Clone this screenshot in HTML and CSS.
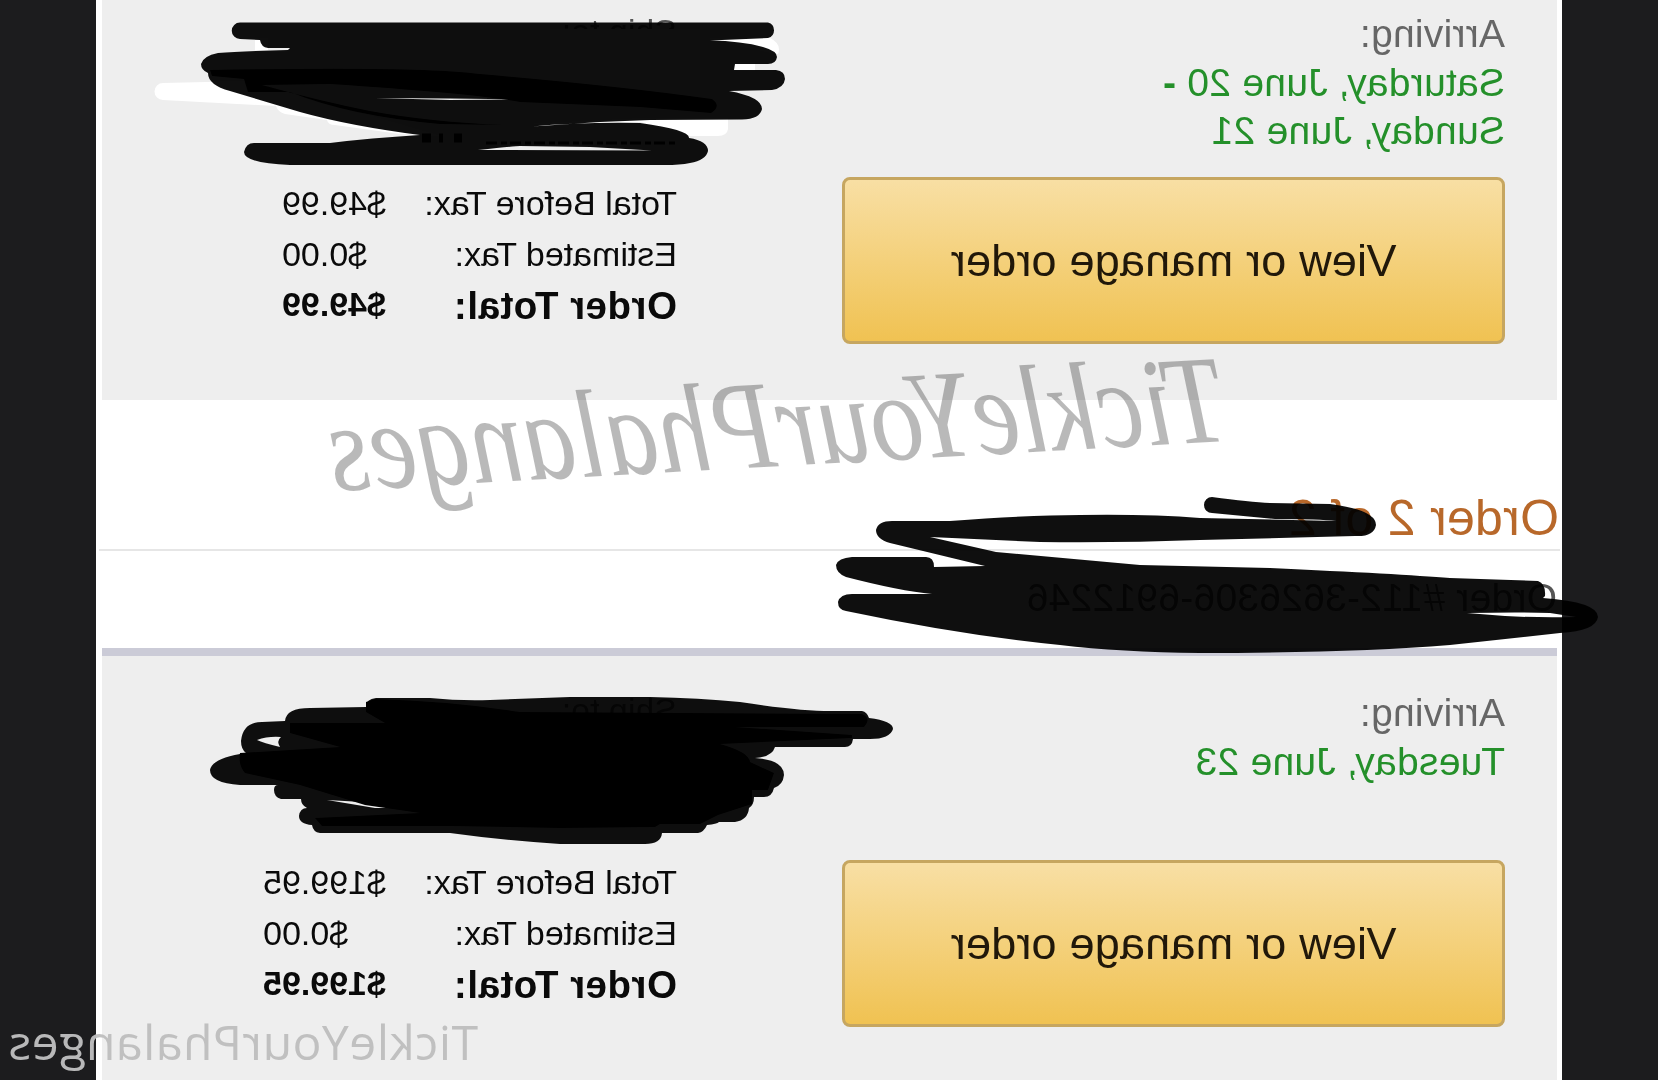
FILE: index.html
```html
<!DOCTYPE html>
<html lang="en">
<head>
<meta charset="utf-8">
<title>Order confirmation</title>
<link rel="stylesheet" href="styles.css">
</head>
<body>
<div class="screen">
  <main class="page">
    <section class="panel panel-first">
      <div class="delivery">
        <div class="label">Arriving:</div>
        <div class="date">Saturday, June 20 <b>-</b><br>Sunday, June 21</div>
        <a class="button">View or manage order</a>
      </div>
      <div class="summary">
        <div class="ship">Ship to:</div>
        <div class="totals">
          <span>Total Before Tax:</span><span class="amount">$49.99</span>
          <span>Estimated Tax:</span><span class="amount">$0.00</span>
          <strong class="total">Order Total:</strong><strong class="amount">$49.99</strong>
        </div>
      </div>
    </section>
    <header class="order-head">
      <h2 class="order-title">Order 2 of 2</h2>
      <div class="order-number">Order #112-3626306-6912246</div>
    </header>
    <section class="panel panel-second">
      <div class="delivery">
        <div class="label">Arriving:</div>
        <div class="date">Tuesday, June 23</div>
        <a class="button">View or manage order</a>
      </div>
      <div class="summary">
        <div class="ship">Ship to:</div>
        <div class="totals">
          <span>Total Before Tax:</span><span class="amount">$199.95</span>
          <span>Estimated Tax:</span><span class="amount">$0.00</span>
          <strong class="total">Order Total:</strong><strong class="amount">$199.95</strong>
        </div>
      </div>
    </section>
  </main>
  <div class="mark mark-script">TickleYourPhalanges</div>
  <div class="mark mark-plain">TickleYourPhalanges</div>
</div>
<svg class="ink" width="1658" height="1080" viewBox="0 0 1658 1080">
  <!-- white marker under the first scribble -->
  <g fill="#fff">
    <path d="M163 83L250 81L440 136L400 134L335 125Q328 125 327 120L285 114Q278 112 276 106L163 100A8 8 0 0 1 163 83Z"/>
    <path d="M710 38L770 38Q782 44 778 54L740 46ZM733 62H755V71H733ZM530 124L650 118H728V129Q727 136 718 136H690L640 122Z"/>
    <path d="M255 38H268V50H288V52H255Z"/>
    <path d="M550 29H700V80H550Z"/>
  </g>
  <!-- black marker -->
  <g fill="#000" fill-opacity=".94" fill-rule="evenodd">
    <path d="M240 22.500H768A8 8 0 0 1 768 38L710 40.500Q742 41 763 47Q777 51 777 57Q776 64 768 64H735L734 70H776Q785 71 785 79Q784 88 772 90L729 91Q762 97 762 109Q760 119 742 119.500L650 120L600 122L532 126.500Q580 122 640 123Q690 130 689 138Q708 141 708 151Q706 160 690 163Q680 165 665 165H290Q244 163 244 152Q246 143 254 143L330 143Q370 138 420 135Q350 126 300 112L230 91Q208 85 208 73Q201 70 201 64Q203 56 218 53Q240 51 288 50L290 48H268Q261 47 260 40L240 39A8 8 0 0 1 240 22.500ZM478 150Q515 146 520 146L590 147L652 150.500ZM375 98L450 98.500L520 99.500L450 100Z"/>
    <path d="M1212 497Q1250 502 1270 503L1330 504Q1376 510 1376 525Q1374 537 1355 536L1200 540Q1120 543 1040 542L930 537L996 552L1140 565L1270 568Q1400 574 1450 578L1538 581Q1546 584 1545 596L1543 598Q1598 602 1598 617Q1596 631 1560 633L1450 645Q1350 653 1200 653Q1120 652 1060 645Q960 635 846 611Q838 610 838 602Q840 594 852 594H932Q900 591 846 577Q836 573 836 565Q838 558 852 557H926Q934 557 934 567L985 566L890 543Q876 539 876 530Q878 521 892 521H950Q1030 515 1080 515Q1150 514 1200 518L1336 521Q1320 519 1275 519L1212 513A8 8 0 0 1 1212 497ZM1467 613Q1520 612 1550 613L1576 617Q1540 618 1505 616Z"/>
    <path d="M376 698L430 698Q460 701 490 700L570 697H650Q700 698 740 702Q800 711 830 711H862Q867 712 869 718Q893 721 893 729Q890 739 870 739H853Q852 747 845 747H775Q772 757 755 758Q784 760 784 775Q783 785 774 788Q772 797 764 797H754Q754 805 749 808Q748 820 735 822H719Q717 824 707 825Q704 832 698 833H662Q661 844 645 844H560Q500 840 450 833H320Q313 832 312 825Q299 824 299 816Q300 808 307 808Q301 805 301 799H281Q274 797 274 790Q274 785 278 785H240Q210 783 210 770Q212 758 246 753Q241 749 241 741Q243 722 262 722L285 721Q286 708 310 708L366 707Q366 699 376 698ZM257 740Q268 736 281 737Q276 741 280 747Q263 743 257 740ZM327 800L362 802L380 805L422 808H375Z"/>
  </g>
  <!-- places where the marker went over itself -->
  <path d="M210 70Q420 66 480 74Q620 86 712 99Q722 106 711 113L640 107L520 102Q480 94 330 84L262 85Q320 101 370 111Q430 122 505 125L440 124Q350 116 290 92L248 92L244 79L212 76Z"/>
  <g fill="none" stroke="#000">
    <path stroke-width="3" stroke-dasharray="11 4 6 3" d="M486 143H675"/>
    <path stroke-width="9" stroke-dasharray="9 8 4 11" d="M422 138H462"/>
  </g>
  <path d="M375 699Q450 701 520 712L862 714Q872 718 864 727H735L852 735V738L720 744Q749 752 750 762L774 773L768 790H752V804L718 815L700 824H660L655 827L560 828L450 826H322L315 818L420 813L365 805L300 785L245 773Q238 765 240 753L290 750L340 747L290 733V723H385L366 712V702Z"/>
</svg>
</body>
</html>
```
FILE: styles.css
```css
body {
  margin: 0;
  background: #1c1c1e;
  font-family: "Liberation Sans", Arial, sans-serif;
  color: #0a0a0a;
}

/* the whole screen is shown as in a mirror */
.screen {
  position: relative;
  width: 1658px;
  height: 1080px;
  overflow: hidden;
  transform: scaleX(-1);
}

.page {
  box-sizing: border-box;
  width: 1466px;
  height: 1080px;
  margin: 0 auto;
  padding: 0 6px 0 5px;
  background: #fff;
}

.panel {
  box-sizing: border-box;
  display: grid;
  grid-template-columns: 663px auto;
  column-gap: 165px;
  justify-content: start;
  padding-left: 52px;
  background: #eee;
}

.panel-first {
  height: 400px;
  padding-top: 10px;
}

.panel-second {
  height: 424px;
  padding-top: 33px;
}

.label,
.date {
  font-size: 39px;
  line-height: 48px;
  letter-spacing: .25px;
  white-space: nowrap;
}

.label {
  margin-bottom: 1px;
  color: #666;
}

.date {
  height: 96px;
  color: #24902a;
}

.button {
  box-sizing: border-box;
  display: flex;
  align-items: center;
  justify-content: center;
  height: 167px;
  margin-top: 22px;
  border: 3px solid #c6a660;
  border-radius: 8px;
  background: linear-gradient(#f8dfa4, #f0c252);
  color: #21180a;
  font-size: 45px;
  letter-spacing: .2px;
}

.panel-second .button {
  margin-top: 26px;
}

.ship {
  height: 51px;
  margin-top: -3px;
  color: #555;
  font-size: 34px;
  line-height: 48px;
}

.totals {
  display: inline-grid;
  grid-template-columns: 291px auto;
  grid-auto-rows: 50.5px;
  margin-top: 120px;
  font-size: 34px;
  line-height: 50px;
  white-space: nowrap;
}

.total {
  font-size: 38.5px;
  line-height: 53px;
  letter-spacing: .5px;
}

.amount {
  font-size: 34px;
  text-align: right;
}

.order-head {
  height: 248px;
  border-bottom: 8px solid #cbcbd7;
}

.order-title {
  box-sizing: border-box;
  height: 151px;
  margin: 0 -3px;
  padding: 88px 0 0 1px;
  border-bottom: 2px solid #e6e6e6;
  color: #b8682a;
  font-size: 50px;
  font-weight: 400;
  line-height: 60px;
  letter-spacing: .3px;
}

.order-number {
  padding-top: 23px;
  color: #555;
  font-size: 39px;
  line-height: 48px;
  letter-spacing: .25px;
}

.mark {
  position: absolute;
  white-space: nowrap;
}

.mark-script {
  left: 430px;
  top: 331px;
  color: rgba(14, 14, 14, .29);
  font: italic 126px/136px "Liberation Serif", "Times New Roman", serif;
  transform: rotate(3.2deg) scaleX(.843);
  transform-origin: 0 109px;
}

.mark-plain {
  left: 1180px;
  top: 1010px;
  color: rgba(190, 190, 190, .97);
  font: 48px/64px "Open Sans", sans-serif;
  letter-spacing: .55px;
}

.ink {
  position: absolute;
  left: 0;
  top: 0;
}
```
